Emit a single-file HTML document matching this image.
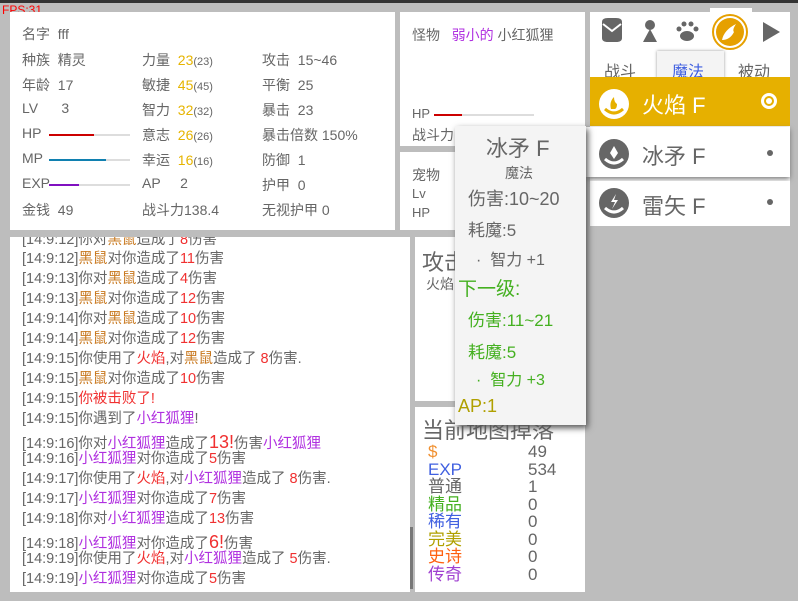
<!DOCTYPE html>
<html><head><meta charset="utf-8"><style>
*{margin:0;padding:0;box-sizing:border-box}
body{width:798px;height:601px;background:#bdbdbd;position:relative;overflow:hidden;font-family:"Liberation Sans","Noto Sans CJK SC",sans-serif;color:#666;font-size:14px}
.a{position:absolute;white-space:nowrap}
.p{position:absolute;background:#fff}
.y{color:#e6b400}.s{font-size:11px}
.o{color:#c8781e}.r{color:#f03030}.m{color:#b030e0}.g{color:#44b020}
.log div{position:absolute;left:12px;font-size:14.5px;white-space:nowrap;line-height:18px}
.bar{position:absolute;height:2px;background:#ddd}
</style></head><body>
<div class="p" style="left:0;top:0;width:798px;height:3px;background:#333"></div>
<div class="a" style="left:2px;top:3px;color:#f00;font-size:12px">FPS:31</div>

<div class="p" style="left:10px;top:12px;width:385px;height:218px"></div>
<div class="a" style="left:22px;top:24px">名字&nbsp; fff</div>
<div class="a" style="left:22px;top:50px">种族&nbsp; 精灵</div>
<div class="a" style="left:22px;top:75px">年龄&nbsp; 17</div>
<div class="a" style="left:22px;top:100px">LV&nbsp;&nbsp;&nbsp;&nbsp;&nbsp; 3</div>
<div class="a" style="left:22px;top:125px">HP</div>
<div class="bar" style="left:49px;top:134px;width:81px"></div><div class="bar" style="left:49px;top:134px;width:45px;background:#c00"></div>
<div class="a" style="left:22px;top:150px">MP</div>
<div class="bar" style="left:49px;top:159px;width:81px"></div><div class="bar" style="left:49px;top:159px;width:57px;background:#1080b0"></div>
<div class="a" style="left:22px;top:175px">EXP</div>
<div class="bar" style="left:49px;top:184px;width:81px"></div><div class="bar" style="left:49px;top:184px;width:30px;background:#8010c0"></div>
<div class="a" style="left:22px;top:200px">金钱&nbsp; 49</div>

<div class="a" style="left:142px;top:50px">力量&nbsp; <span class="y">23</span><span class="s">(23)</span></div>
<div class="a" style="left:142px;top:75px">敏捷&nbsp; <span class="y">45</span><span class="s">(45)</span></div>
<div class="a" style="left:142px;top:100px">智力&nbsp; <span class="y">32</span><span class="s">(32)</span></div>
<div class="a" style="left:142px;top:125px">意志&nbsp; <span class="y">26</span><span class="s">(26)</span></div>
<div class="a" style="left:142px;top:150px">幸运&nbsp; <span class="y">16</span><span class="s">(16)</span></div>
<div class="a" style="left:142px;top:175px">AP&nbsp;&nbsp;&nbsp;&nbsp; 2</div>
<div class="a" style="left:142px;top:200px">战斗力138.4</div>

<div class="a" style="left:262px;top:50px">攻击&nbsp; 15~46</div>
<div class="a" style="left:262px;top:75px">平衡&nbsp; 25</div>
<div class="a" style="left:262px;top:100px">暴击&nbsp; 23</div>
<div class="a" style="left:262px;top:125px">暴击倍数 150%</div>
<div class="a" style="left:262px;top:150px">防御&nbsp; 1</div>
<div class="a" style="left:262px;top:175px">护甲&nbsp; 0</div>
<div class="a" style="left:262px;top:200px">无视护甲 0</div>

<div class="p log" style="left:10px;top:237px;width:400px;height:355px;overflow:hidden">
<div style="top:-6px">[14:9:12]你对<span class="o">黑鼠</span>造成了<span class="r">8</span>伤害</div>
<div style="top:13px">[14:9:12]<span class="o">黑鼠</span>对你造成了<span class="r">11</span>伤害</div>
<div style="top:33px">[14:9:13]你对<span class="o">黑鼠</span>造成了<span class="r">4</span>伤害</div>
<div style="top:53px">[14:9:13]<span class="o">黑鼠</span>对你造成了<span class="r">12</span>伤害</div>
<div style="top:73px">[14:9:14]你对<span class="o">黑鼠</span>造成了<span class="r">10</span>伤害</div>
<div style="top:93px">[14:9:14]<span class="o">黑鼠</span>对你造成了<span class="r">12</span>伤害</div>
<div style="top:113px">[14:9:15]你使用了<span class="r">火焰</span>,对<span class="o">黑鼠</span>造成了 <span class="r">8</span>伤害.</div>
<div style="top:133px">[14:9:15]<span class="o">黑鼠</span>对你造成了<span class="r">10</span>伤害</div>
<div style="top:153px">[14:9:15]<span class="r">你被击败了!</span></div>
<div style="top:173px">[14:9:15]你遇到了<span class="m">小红狐狸</span>!</div>
<div style="top:196px">[14:9:16]你对<span class="m">小红狐狸</span>造成了<span class="r" style="font-size:18px">13!</span>伤害<span class="m">小红狐狸</span></div>
<div style="top:213px">[14:9:16]<span class="m">小红狐狸</span>对你造成了<span class="r">5</span>伤害</div>
<div style="top:233px">[14:9:17]你使用了<span class="r">火焰</span>,对<span class="m">小红狐狸</span>造成了 <span class="r">8</span>伤害.</div>
<div style="top:253px">[14:9:17]<span class="m">小红狐狸</span>对你造成了<span class="r">7</span>伤害</div>
<div style="top:273px">[14:9:18]你对<span class="m">小红狐狸</span>造成了<span class="r">13</span>伤害</div>
<div style="top:296px">[14:9:18]<span class="m">小红狐狸</span>对你造成了<span class="r" style="font-size:18px">6!</span>伤害</div>
<div style="top:313px">[14:9:19]你使用了<span class="r">火焰</span>,对<span class="m">小红狐狸</span>造成了 <span class="r">5</span>伤害.</div>
<div style="top:333px">[14:9:19]<span class="m">小红狐狸</span>对你造成了<span class="r">5</span>伤害</div>
</div>
<div class="p" style="left:410px;top:527px;width:3px;height:62px;background:#777"></div>

<div class="p" style="left:400px;top:12px;width:185px;height:134px"></div>
<div class="a" style="left:412px;top:25px">怪物&nbsp;&nbsp; <span class="m">弱小的</span> 小红狐狸</div>
<div class="a" style="left:412px;top:106px;font-size:13px">HP</div>
<div class="bar" style="left:434px;top:114px;width:100px"></div><div class="bar" style="left:434px;top:114px;width:28px;background:#c00"></div>
<div class="a" style="left:412px;top:125px">战斗力</div>

<div class="p" style="left:400px;top:152px;width:185px;height:78px"></div>
<div class="a" style="left:412px;top:165px">宠物</div>
<div class="a" style="left:412px;top:186px;font-size:13px">Lv</div>
<div class="a" style="left:412px;top:205px;font-size:13px">HP</div>

<div class="p" style="left:415px;top:237px;width:170px;height:164px"></div>
<div class="a" style="left:422px;top:245px;font-size:22px">攻击</div>
<div class="a" style="left:426px;top:274px">火焰</div>

<div class="p" style="left:415px;top:407px;width:170px;height:185px"></div>
<div class="a" style="left:422px;top:413px;font-size:22px">当前地图掉落</div>
<div class="a" style="left:428px;top:443px;line-height:17.5px;font-size:17px">
<div style="color:#f09030">$</div><div style="color:#4060e0">EXP</div><div>普通</div><div class="g">精品</div><div style="color:#4060e0">稀有</div><div style="color:#b0a000">完美</div><div style="color:#ff6010">史诗</div><div style="color:#a040d0">传奇</div></div>
<div class="a" style="left:528px;top:443px;line-height:17.5px;font-size:17px"><div>49</div><div>534</div><div>1</div><div>0</div><div>0</div><div>0</div><div>0</div><div>0</div></div>

<div class="p" style="left:590px;top:12px;width:200px;height:214px"></div>
<div class="p" style="left:710px;top:8px;width:42px;height:42px"></div>
<svg class="a" style="left:590px;top:12px" width="200" height="40">
<path d="M12 10 q0-4 6-4h8q6 0 6 4v16q0 4-6 4h-8q-6 0-6-4z" fill="#666"/><path d="M13 12 l9 7 9-7" stroke="#fff" stroke-width="2" fill="none"/>
<circle cx="60" cy="13" r="5" fill="#666"/><path d="M60 17 l-7 13h14z" fill="#666"/>
<ellipse cx="97" cy="24" rx="7" ry="5" fill="#666"/><circle cx="89" cy="17" r="2.5" fill="#666"/><circle cx="94" cy="12" r="2.5" fill="#666"/><circle cx="101" cy="12" r="2.5" fill="#666"/><circle cx="106" cy="17" r="2.5" fill="#666"/>
<circle cx="140" cy="20" r="17" fill="#fff" stroke="#e6a000" stroke-width="2"/><circle cx="140" cy="20" r="14" fill="#e6a000"/><path d="M132 28 q2-10 14-16 q-4 6-2 8 q-4 8-12 8z" fill="#fff"/>
<path d="M173 10 v20 l17-10z" fill="#666"/>
</svg>
<div class="a" style="left:604px;top:58px;font-size:16px">战斗</div>
<div class="p" style="left:657px;top:51px;width:67px;height:28px;background:#f4f4f4;box-shadow:0 0 3px #999"></div>
<div class="a" style="left:672px;top:58px;font-size:16px;color:#4060e0">魔法</div>
<div class="a" style="left:738px;top:58px;font-size:16px">被动</div>

<div class="p" style="left:590px;top:77px;width:200px;height:49px;background:#e6b000"></div>
<svg class="a" style="left:599px;top:89px" width="30" height="30"><circle cx="15" cy="15" r="15" fill="#fff"/><path d="M6 20 q9 8 18 0" stroke="#e6b000" stroke-width="3" fill="none"/><path d="M12 20 q-2-7 3-12 q0 5 3 7 q0 4-2 5z" fill="#e6b000"/></svg>
<div class="a" style="left:642px;top:88px;font-size:22px;color:#fff">火焰 F</div>
<div class="p" style="left:761px;top:93px;width:16px;height:16px;border-radius:50%;background:#e6b000;border:3px solid #fff"></div>
<div class="p" style="left:766px;top:98px;width:6px;height:6px;border-radius:50%;background:#fff"></div>

<div class="p" style="left:586px;top:127px;width:204px;height:50px;box-shadow:0 2px 5px #777"></div>
<svg class="a" style="left:599px;top:139px" width="30" height="30"><circle cx="15" cy="15" r="15" fill="#666"/><path d="M6 20 q9 8 18 0" stroke="#fff" stroke-width="3" fill="none"/><path d="M15 7 l4 7 -4 6 -4-6z" fill="#fff"/></svg>
<div class="a" style="left:642px;top:139px;font-size:22px">冰矛 F</div>
<div class="p" style="left:767px;top:150px;width:6px;height:6px;border-radius:50%;background:#666"></div>

<div class="p" style="left:590px;top:181px;width:200px;height:45px"></div>
<svg class="a" style="left:599px;top:188px" width="30" height="30"><circle cx="15" cy="15" r="15" fill="#666"/><path d="M6 20 q9 8 18 0" stroke="#fff" stroke-width="3" fill="none"/><path d="M17 6 l-5 8 h4 l-3 7 6-9 h-4z" fill="#fff"/></svg>
<div class="a" style="left:642px;top:189px;font-size:22px">雷矢 F</div>
<div class="p" style="left:767px;top:199px;width:6px;height:6px;border-radius:50%;background:#666"></div>

<div class="p" style="left:455px;top:126px;width:131px;height:299px;background:#f4f4f4;box-shadow:2px 3px 6px #555"></div>
<div class="a" style="left:486px;top:131px;font-size:22px">冰矛 F</div>
<div class="a" style="left:505px;top:163px;font-size:14px">魔法</div>
<div class="a" style="left:468px;top:185px;font-size:18px">伤害:10~20</div>
<div class="a" style="left:468px;top:216px;font-size:17px">耗魔:5</div>
<div class="a" style="left:476px;top:246px;font-size:16px">·&nbsp; 智力 +1</div>
<div class="a g" style="left:458px;top:274px;font-size:19px">下一级:</div>
<div class="a g" style="left:468px;top:306px;font-size:17px">伤害:11~21</div>
<div class="a g" style="left:468px;top:338px;font-size:17px">耗魔:5</div>
<div class="a g" style="left:476px;top:366px;font-size:16px">·&nbsp; 智力 +3</div>
<div class="a" style="left:458px;top:396px;font-size:18px;color:#b0a000">AP:1</div>
</body></html>
